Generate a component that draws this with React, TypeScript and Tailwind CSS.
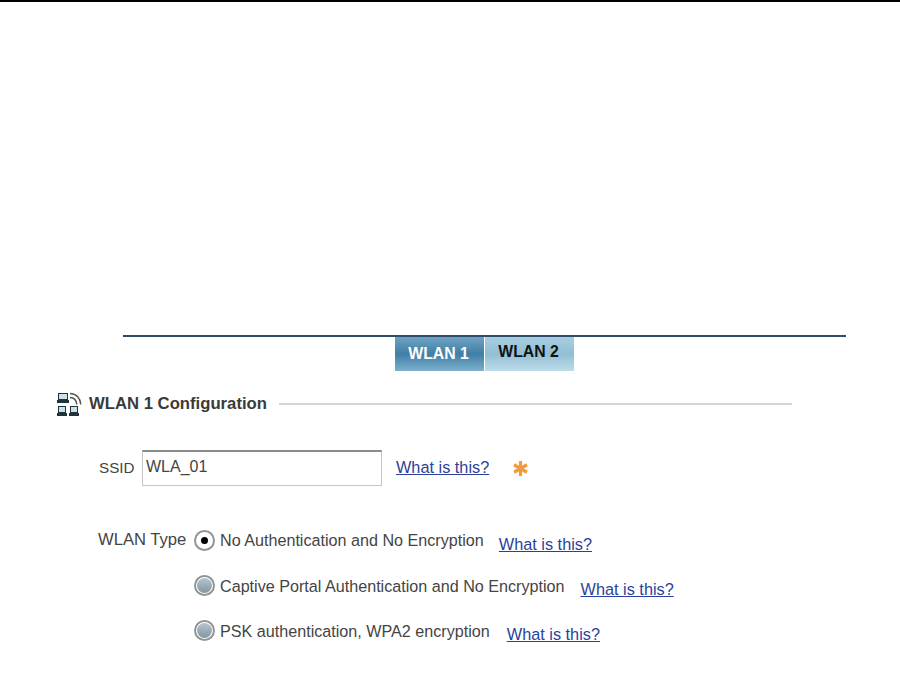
const font = { fontFamily: '"Liberation Sans", Arial, sans-serif' }

function WhatIsThis({ className = '' }: { className?: string }) {
  return (
    <a href="#" className={`text-[16.3px] leading-[18px] text-[#2b3f9c] underline ${className}`}>
      What is this?
    </a>
  )
}

function Radio({ checked }: { checked?: boolean }) {
  return (
    <span className="flex h-[21px] w-[21px] shrink-0 items-center justify-center rounded-full border-2 border-[#8f9494] bg-white">
      {checked ? (
        <span className="h-[7px] w-[7px] rounded-full bg-black" />
      ) : (
        <span className="h-[15px] w-[15px] rounded-full bg-gradient-to-b from-[#b5c5d0] to-[#84969f]" />
      )}
    </span>
  )
}

function WlanIcon() {
  return (
    <svg width="26" height="25" viewBox="0 0 26 25" fill="none" className="mt-[2px]">
      <rect x="2.5" y="1.5" width="9" height="6" fill="#cfe0e6" stroke="#1d3440" />
      <rect x="1" y="8" width="12" height="3" fill="#1d3440" />
      <rect x="2.5" y="14.5" width="7" height="6" fill="#cfe0e6" stroke="#1d3440" />
      <rect x="1" y="21" width="10" height="3" fill="#1d3440" />
      <rect x="14.5" y="14.5" width="7" height="6" fill="#cfe0e6" stroke="#1d3440" />
      <rect x="13" y="21" width="10" height="3" fill="#1d3440" />
      <path d="M14 5.5c4 .2 6.5 3 6.8 7" stroke="#555" strokeWidth="1.5" />
      <path d="M14 1.5c6.5 .2 10.5 5 10.8 11" stroke="#555" strokeWidth="1.5" />
    </svg>
  )
}

function Star() {
  return (
    <svg width="15" height="15" viewBox="0 0 15 15" className="ml-[24px]" stroke="#f39a3c" strokeWidth="3.2" strokeLinecap="butt">
      <path d="M7.5 0v15M1 3.75l13 7.5M14 3.75l-13 7.5" />
    </svg>
  )
}

export default function App() {
  return (
    <div style={font} className="h-[679px] w-[900px] overflow-hidden border-t-2 border-black bg-white text-[16.15px] text-[#444]">
      {/* rule above the tabs */}
      <div className="ml-[123px] mt-[333px] h-[2px] w-[723px] bg-[#2f4d6b]" />

      <div className="ml-[395px] flex h-[34px] gap-px">
        <div className="flex w-[89px] items-center justify-center bg-gradient-to-b from-[#6fa3c2] via-[#3f7fa6] to-[#7db0cc] pr-[2px] text-[15.8px] font-bold text-white">
          WLAN 1
        </div>
        <div className="flex w-[89px] items-center justify-center bg-gradient-to-b from-[#a8cfe0] via-[#92bfd4] to-[#bedcea] pr-[2px] pb-1 text-[15.8px] font-bold text-[#111]">
          WLAN 2
        </div>
      </div>

      <div className="ml-[56px] mt-[20px] flex h-[25px] w-[736px] items-center">
        <WlanIcon />
        <span className="ml-[7px] text-[16.7px] font-bold whitespace-nowrap text-[#3a3a3a]">WLAN 1 Configuration</span>
        <div className="ml-3 h-[2px] flex-1 bg-[#d4d4d4]" />
      </div>

      <div className="ml-[99px] mt-[34px] flex h-[36px] items-center">
        <span className="w-[43px] text-[15.2px]">SSID</span>
        <input
          readOnly
          value="WLA_01"
          className="h-[36px] w-[240px] border border-[#c4c6c4] border-t-2 border-t-[#8a8c8a] px-[3px] pb-[4px] text-[16px] text-[#444] outline-none"
        />
        <WhatIsThis className="ml-[14px] mb-[2px]" />
        <Star />
      </div>

      <div className="ml-[98px] mt-[44px] flex flex-col gap-[24px]">
        <div className="flex h-[21px] items-center">
          <span className="w-[96px] text-[16.6px]">WLAN Type</span>
          <Radio checked />
          <span className="ml-[5px]">No Authentication and No Encryption</span>
          <WhatIsThis className="ml-[15px] mt-[6px]" />
        </div>
        <div className="flex h-[21px] items-center pl-[96px]">
          <Radio />
          <span className="ml-[5px] mt-[1px]">Captive Portal Authentication and No Encryption</span>
          <WhatIsThis className="ml-[16px] mt-[6px]" />
        </div>
        <div className="flex h-[21px] items-center pl-[96px]">
          <Radio />
          <span className="ml-[5px] mt-[1px]">PSK authentication, WPA2 encryption</span>
          <WhatIsThis className="ml-[17px] mt-[6px]" />
        </div>
      </div>
    </div>
  )
}
